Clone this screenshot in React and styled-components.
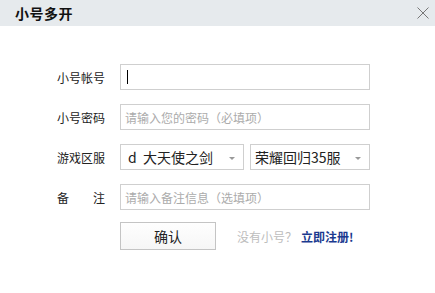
import React from "react";
import styled, { createGlobalStyle } from "styled-components";

const Global = createGlobalStyle`
  html, body { margin: 0; padding: 0; background: #fff; }
  body { font-family: "Noto Sans CJK SC", "Noto Sans", sans-serif; }
`;

const Window = styled.div`
  width: 435px;
  height: 293px;
  background: #fff;
  display: flex;
  flex-direction: column;
`;

const TitleBar = styled.div`
  height: 26px;
  background: #e6eaed;
  display: flex;
  align-items: center;
  justify-content: space-between;
  padding: 0 4px 0 15px;
`;

const Title = styled.div`
  font-size: 14px;
  font-weight: bold;
  color: #111;
  letter-spacing: 0.5px;
`;

const Close = styled.div`
  width: 12px;
  height: 12px;
  margin-right: 2px;
  display: flex;
`;

const Form = styled.div`
  display: grid;
  grid-template-columns: 48px auto;
  column-gap: 15px;
  row-gap: 14px;
  padding: 38px 0 0 57px;
  align-items: center;
`;

const Label = styled.div`
  font-size: 12px;
  color: #222;
  display: flex;
  justify-content: ${(p) => (p.$spread ? "space-between" : "flex-start")};
`;

const Field = styled.div`
  width: ${(p) => p.$w || 250}px;
  height: 26px;
  box-sizing: border-box;
  border: 1px solid #cfcfcf;
  background: #fff;
  display: flex;
  align-items: center;
  padding-left: ${(p) => p.$pl || 4}px;
  font-size: ${(p) => (p.$ph ? 12 : 14)}px;
  color: ${(p) => (p.$ph ? "#ababab" : "#222")};
  white-space: pre;
`;

const Cursor = styled.div`
  width: 1px;
  height: 14px;
  background: #000;
  margin-left: 2px;
`;

const Selects = styled.div`
  display: flex;
  gap: 6px;
`;

const Select = styled(Field)`
  justify-content: space-between;
  padding-right: 8px;
`;

const Arrow = styled.div`
  width: 0;
  height: 0;
  border-left: 3px solid transparent;
  border-right: 3px solid transparent;
  border-top: 3px solid #999;
  margin-top: 2px;
`;

const Actions = styled.div`
  display: flex;
  align-items: center;
  padding: 12px 0 0 120px;
`;

const Button = styled.div`
  width: 96px;
  height: 28px;
  box-sizing: border-box;
  border: 1px solid #c4c4c4;
  background: linear-gradient(#fefefe, #f6f6f6);
  display: flex;
  align-items: center;
  justify-content: center;
  font-size: 14px;
  color: #222;
`;

const Hint = styled.span`
  margin-left: 21px;
  font-size: 12px;
  color: #bdbdbd;
`;

const Link = styled.span`
  margin-left: 4px;
  font-size: 12px;
  font-weight: bold;
  color: #1b3a8f;
`;

export default function App() {
  return (
    <Window>
      <Global />
      <TitleBar>
        <Title>小号多开</Title>
        <Close>
          <svg width="12" height="12" viewBox="0 0 12 12">
            <path d="M0.5 0.5 L11.5 11.5 M11.5 0.5 L0.5 11.5" stroke="#777" strokeWidth="1" fill="none" />
          </svg>
        </Close>
      </TitleBar>
      <Form>
        <Label>小号帐号</Label>
        <Field>
          <Cursor />
        </Field>
        <Label>小号密码</Label>
        <Field $ph>请输入您的密码（必填项）</Field>
        <Label>游戏区服</Label>
        <Selects>
          <Select $w={124} $pl={7}>
            <span>{"d  大天使之剑"}</span>
            <Arrow />
          </Select>
          <Select $w={120} $pl={4}>
            <span>荣耀回归35服</span>
            <Arrow />
          </Select>
        </Selects>
        <Label $spread>
          <span>备</span>
          <span>注</span>
        </Label>
        <Field $ph>请输入备注信息（选填项）</Field>
      </Form>
      <Actions>
        <Button>确认</Button>
        <Hint>没有小号？</Hint>
        <Link>立即注册!</Link>
      </Actions>
    </Window>
  );
}
